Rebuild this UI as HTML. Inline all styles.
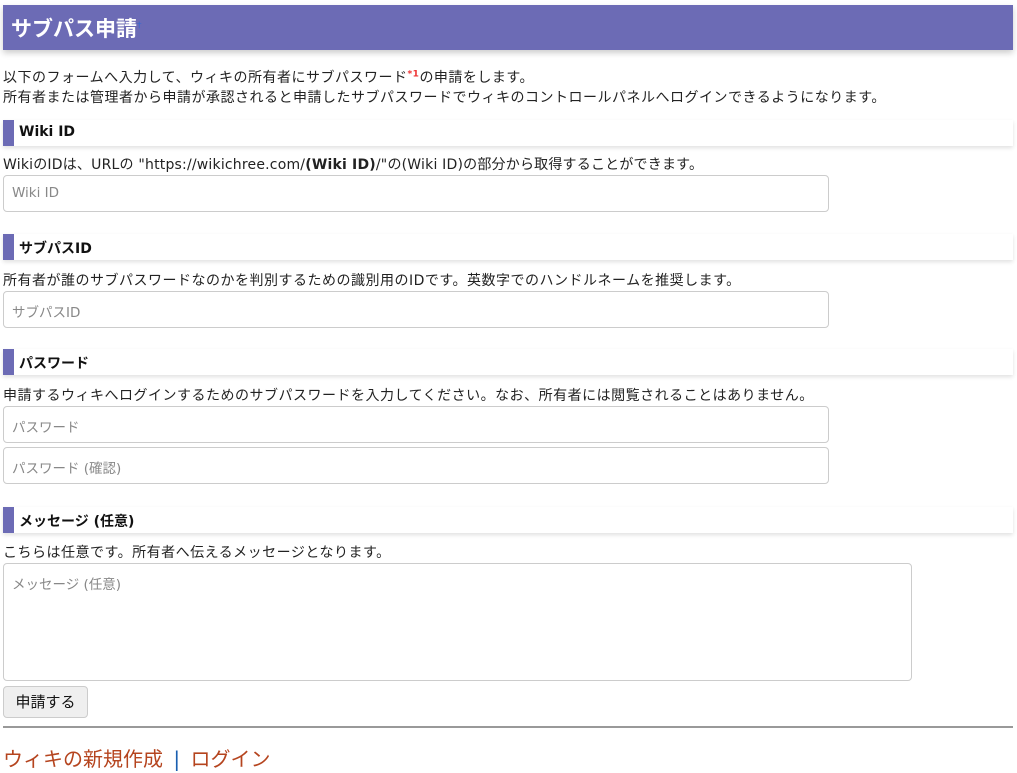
<!DOCTYPE html><html><head><meta charset="utf-8"><style>
body{margin:0;width:1017px;height:773px;background:#fff;font-family:"DejaVu Sans","Noto Sans CJK JP",sans-serif;font-size:14px;letter-spacing:0.5px;color:#222;position:relative;overflow:hidden}
.a{position:absolute;white-space:nowrap}
.title{left:3px;top:5px;width:1010px;height:45px;background:#6c6bb5;box-shadow:0 3px 6px rgba(0,0,0,.2);letter-spacing:0}
.title span{position:absolute;left:8px;top:8px;color:#fff;font-weight:bold;font-size:21px}
.h{left:3px;width:1010px;height:26px;box-shadow:0 2px 4px rgba(0,0,0,.12);border-left:11px solid #6c6bb5;box-sizing:border-box;letter-spacing:0}
.h b{position:absolute;left:5px;top:4px;font-size:14px;color:#111}
.in{left:3px;width:826px;height:37px;border:1px solid #ccc;border-radius:4px;box-sizing:border-box;color:#888;font-size:13.5px;padding:9px 0 0 8px;letter-spacing:0}
</style></head><body>
<div class="a title"><span>サブパス申請<sup style="color:#3a6ad0;font-size:9px;font-weight:normal">†</sup></span></div>
<div class="a" style="left:3px;top:67px">以下のフォームへ入力して、ウィキの所有者にサブパスワード<sup style="color:#e33;font-size:9px;font-weight:bold">*1</sup>の申請をします。</div>
<div class="a" style="left:3px;top:87px">所有者または管理者から申請が承認されると申請したサブパスワードでウィキのコントロールパネルへログインできるようになります。</div>
<div class="a h" style="top:120px"><b>Wiki ID</b></div>
<div class="a" style="left:3px;top:154px;letter-spacing:0.2px">WikiのIDは、URLの "https://wikichree.com/<b>(Wiki ID)</b>/"の(Wiki ID)の部分から取得することができます。</div>
<div class="a in" style="top:175px">Wiki ID</div>
<div class="a h" style="top:234px"><b>サブパスID</b></div>
<div class="a" style="left:3px;top:270px">所有者が誰のサブパスワードなのかを判別するための識別用のIDです。英数字でのハンドルネームを推奨します。</div>
<div class="a in" style="top:291px">サブパスID</div>
<div class="a h" style="top:349px"><b>パスワード</b></div>
<div class="a" style="left:3px;top:385px">申請するウィキへログインするためのサブパスワードを入力してください。なお、所有者には閲覧されることはありません。</div>
<div class="a in" style="top:406px">パスワード</div>
<div class="a in" style="top:447px">パスワード (確認)</div>
<div class="a h" style="top:507px"><b>メッセージ (任意)</b></div>
<div class="a" style="left:3px;top:542px">こちらは任意です。所有者へ伝えるメッセージとなります。</div>
<div class="a in" style="top:563px;width:909px;height:118px">メッセージ (任意)</div>
<div class="a" style="left:3px;top:686px;width:85px;height:32px;border:1px solid #ccc;border-radius:4px;background:#efefef;box-sizing:border-box;font-size:15px;text-align:center;line-height:30px;color:#111;letter-spacing:0">申請する</div>
<div class="a" style="left:3px;top:726px;width:1010px;height:0;border-top:2px solid #999"></div>
<div class="a" style="left:3px;top:743px;font-size:20px;color:#b5441e;letter-spacing:0">ウィキの新規作成 <span style="color:#1a5fb0;padding:0 4px">|</span> ログイン</div>
</body></html>
